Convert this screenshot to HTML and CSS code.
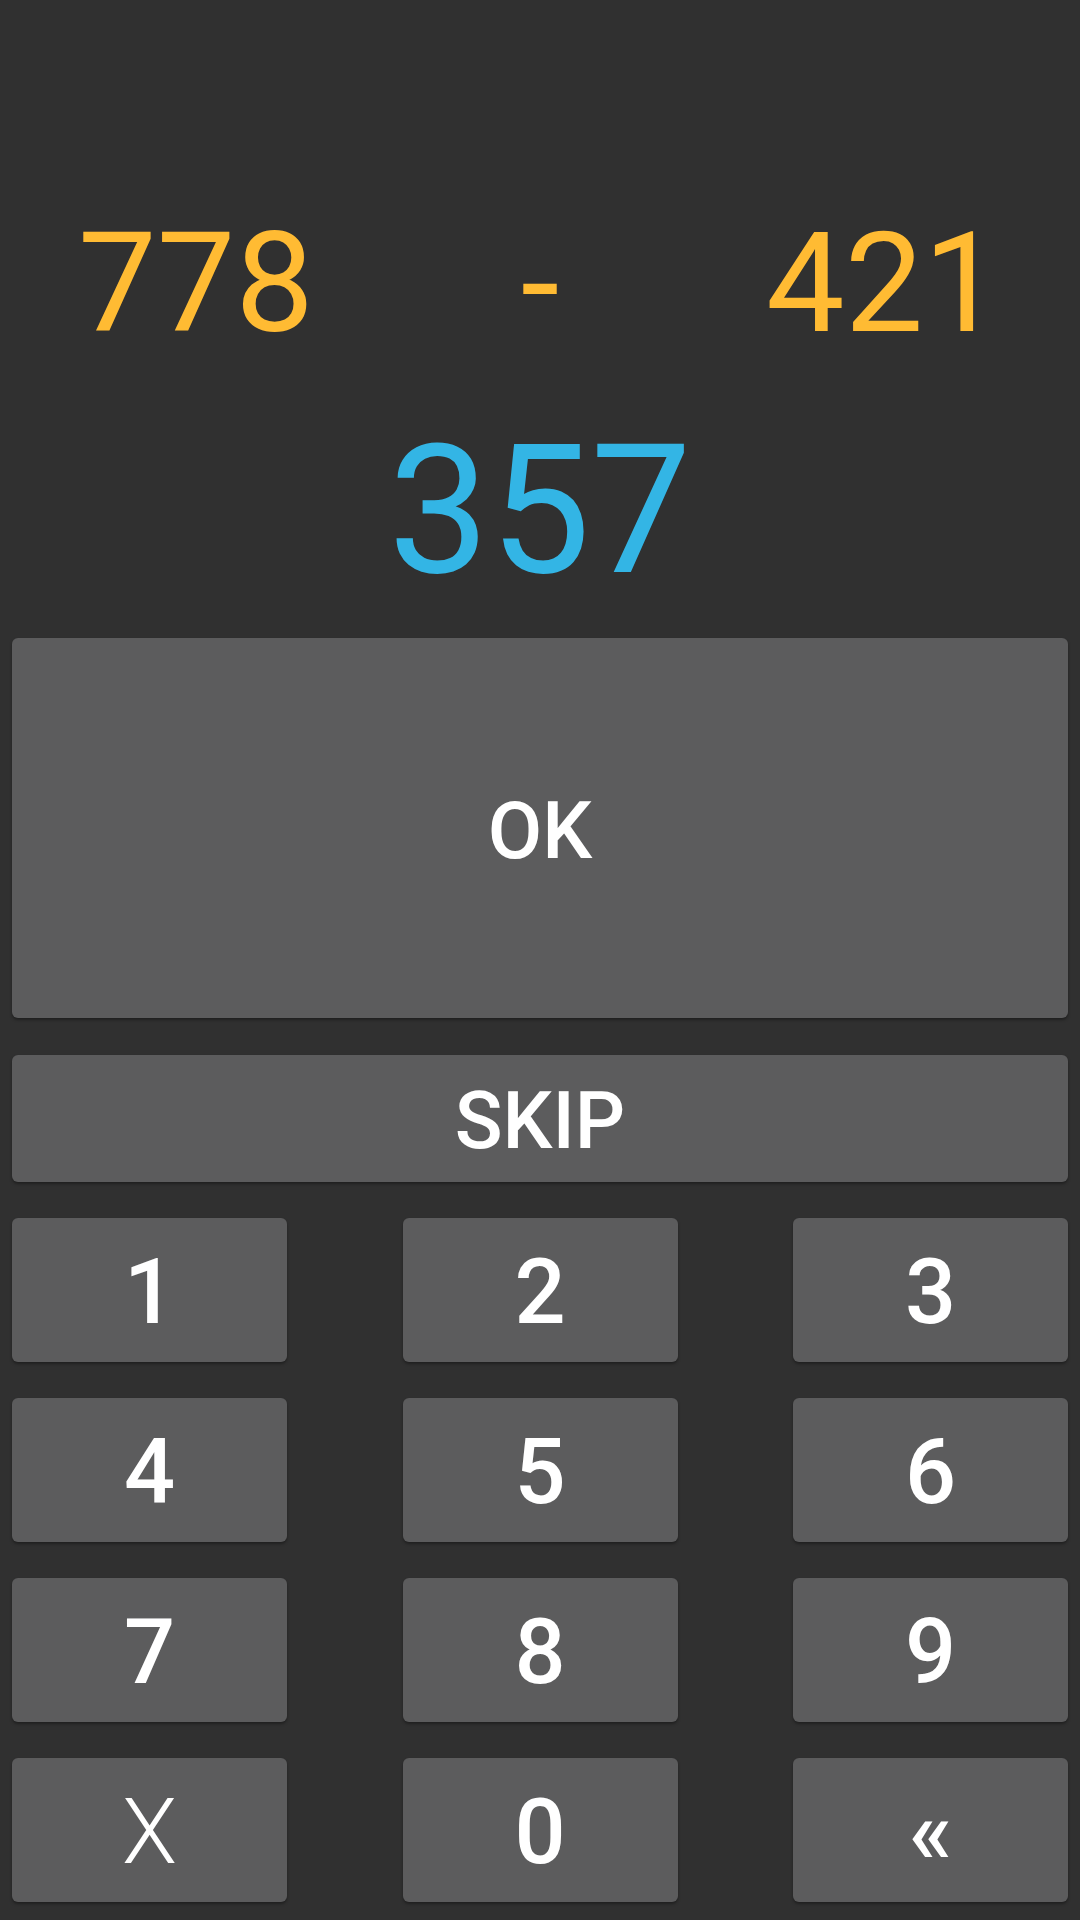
FILE: index.html
```html
<!DOCTYPE html>
<html>
<head>
<meta charset="utf-8">
<link rel="stylesheet" href="styles.css">
</head>
<body>
<div class="screen">
  <div class="problem">
    <div class="operand">778</div>
    <div class="operand">-</div>
    <div class="operand">421</div>
  </div>
  <div class="answer">357</div>
  <div class="btn btn-ok">OK</div>
  <div class="btn btn-skip">SKIP</div>
  <div class="keypad">
    <div class="btn key">1</div>
    <div class="btn key">2</div>
    <div class="btn key">3</div>
    <div class="btn key">4</div>
    <div class="btn key">5</div>
    <div class="btn key">6</div>
    <div class="btn key">7</div>
    <div class="btn key">8</div>
    <div class="btn key">9</div>
    <div class="btn key key-light">X</div>
    <div class="btn key">0</div>
    <div class="btn key">«</div>
  </div>
</div>
</body>
</html>
```

FILE: styles.css
```css
html, body {
  margin: 0;
  padding: 0;
  background: #303030;
}
body {
  width: 1080px;
  height: 1920px;
  overflow: hidden;
  font-family: Roboto, "Noto Sans", sans-serif;
}
.screen {
  padding: 0 12px;
  display: flex;
  flex-direction: column;
}
.problem {
  padding: 213px 12px 0;
  display: grid;
  grid-template-columns: 1fr 1fr 1fr;
}
.operand {
  text-align: center;
  font-size: 140px;
  line-height: 140px;
  color: #ffbb33;
}
.answer {
  margin-top: 68px;
  text-align: center;
  font-size: 180px;
  line-height: 180px;
  color: #33b5e5;
}
.btn {
  background: #5c5c5d;
  border-radius: 6px;
  box-shadow: 0 2px 3px rgba(0, 0, 0, 0.35);
  color: #ffffff;
  font-weight: 500;
  display: flex;
  align-items: center;
  justify-content: center;
  box-sizing: border-box;
  padding-top: 5px;
}
.btn-ok {
  margin-top: 37px;
  height: 380px;
  font-size: 79px;
}
.btn-skip {
  margin-top: 37px;
  height: 127px;
  font-size: 79px;
}
.keypad {
  margin-top: 36px;
  display: grid;
  grid-template-columns: repeat(3, 275px);
  grid-auto-rows: 144px;
  row-gap: 36px;
  justify-content: space-between;
}
.key {
  font-size: 90px;
}
.key-light {
  font-weight: 300;
}
```
